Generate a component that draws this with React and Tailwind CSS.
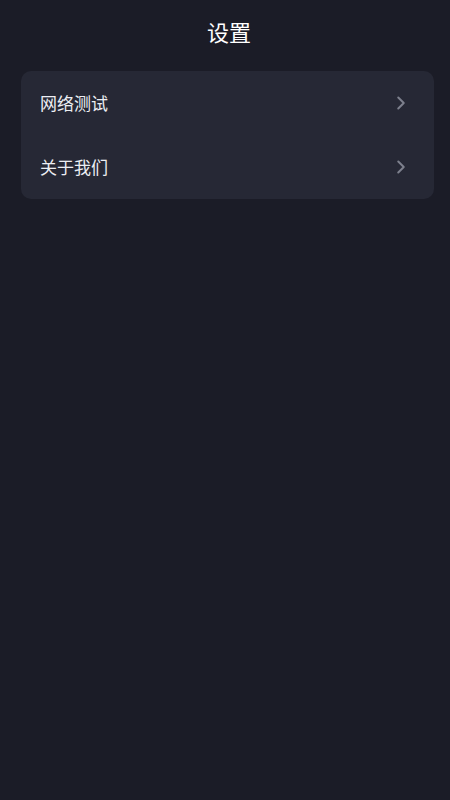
import { ChevronRight } from "lucide-react"

const items = [
  { id: 1, label: "网络测试" },
  { id: 2, label: "关于我们" },
]

const App = () => {
  return (
    <div
      className="min-h-screen bg-[#1b1c27] text-white"
      style={{ fontFamily: '"Noto Sans CJK SC", "Noto Sans", sans-serif' }}
    >
      {/* Header */}
      <header className="h-[62px] flex items-center justify-center pl-[8px]">
        <h1 className="text-[22px] font-normal">设置</h1>
      </header>

      {/* Settings list */}
      <div className="ml-[21px] mr-[16px] mt-[9px] rounded-[10px] bg-[#262835]">
        {items.map((item) => (
          <div key={item.id} className="h-[64px] flex items-center justify-between pl-[19px] pr-[22px]">
            <span className="text-[17px] text-[#eceef3]">{item.label}</span>
            <ChevronRight className="w-[22px] h-[22px] text-[#7d808d]" strokeWidth={2.2} />
          </div>
        ))}
      </div>
    </div>
  )
}

export default App
